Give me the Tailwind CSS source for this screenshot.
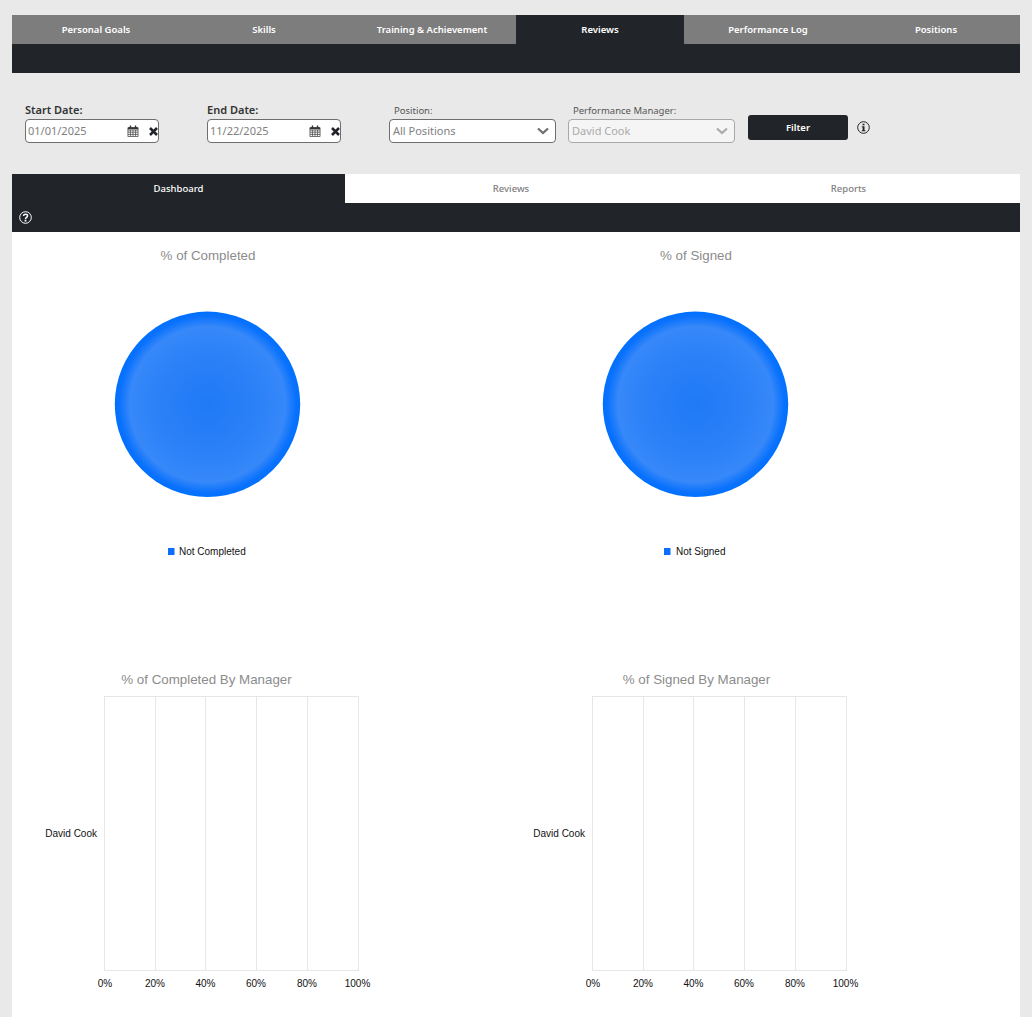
<!DOCTYPE html>
<html lang="en">
<head>
    <meta charset="UTF-8">
    <title>Reviews</title>
    <script src="https://cdn.jsdelivr.net/npm/@tailwindcss/browser@4"></script>
</head>
<body class="bg-[#e9e9e9] font-['Noto_Sans',sans-serif] overflow-hidden">
    <div class="h-[1017px] px-3 pt-[15px] w-[1032px]">
        <!-- Main tabs -->
        <nav class="grid grid-cols-6 h-[29px] bg-[#7d7d7d] text-[9.500px] font-semibold text-white">
            <a class="flex items-center justify-center pt-px">Personal Goals</a>
            <a class="flex items-center justify-center pt-px">Skills</a>
            <a class="flex items-center justify-center pt-px">Training &amp; Achievement</a>
            <a class="flex items-center justify-center pt-px bg-[#212529]">Reviews</a>
            <a class="flex items-center justify-center pt-px">Performance Log</a>
            <a class="flex items-center justify-center pt-px">Positions</a>
        </nav>
        <div class="h-[29px] bg-[#212529]"></div>

        <!-- Filters -->
        <section class="flex items-start h-[101px] pt-[30px] pl-[13px]">
            <div class="w-[182px]">
                <label class="block h-[15px] -mt-px mb-[2px] text-[11px] leading-[15px] font-semibold text-[#333]">Start Date:</label>
                <div class="flex items-center w-[134px] h-6 pl-[2px] bg-white border border-[#6e6e6e] rounded-[4px] text-[11px] text-[#808080]">
                    <span class="flex-1">01/01/2025</span>
                    <svg class="w-3 h-3 mr-[10px]" viewBox="0 0 13 13"><path fill="none" stroke="#444" stroke-width=".8" d="M1 3h11v9.500h-11zM1 5.500h11M1 7.800h11M1 10.200h11M3.700 5.500v7M6.500 5.500v7M9.300 5.500v7"/><path fill="#333" d="M3 .5h1.500v3h-1.500zM8.500 .5h1.500v3h-1.500zM1 2.500h11v2h-11z"/></svg>
                    <svg class="w-[9px] h-[9px]" viewBox="0 0 9 9"><path stroke="#212529" stroke-width="2.600" d="M1 1l7 7M8 1l-7 7"/></svg>
                </div>
            </div>
            <div class="w-[182px]">
                <label class="block h-[15px] -mt-px mb-[2px] text-[11px] leading-[15px] font-semibold text-[#333]">End Date:</label>
                <div class="flex items-center w-[134px] h-6 pl-[2px] bg-white border border-[#6e6e6e] rounded-[4px] text-[11px] text-[#808080]">
                    <span class="flex-1">11/22/2025</span>
                    <svg class="w-3 h-3 mr-[10px]" viewBox="0 0 13 13"><path fill="none" stroke="#444" stroke-width=".8" d="M1 3h11v9.500h-11zM1 5.500h11M1 7.800h11M1 10.200h11M3.700 5.500v7M6.500 5.500v7M9.300 5.500v7"/><path fill="#333" d="M3 .5h1.500v3h-1.500zM8.500 .5h1.500v3h-1.500zM1 2.500h11v2h-11z"/></svg>
                    <svg class="w-[9px] h-[9px]" viewBox="0 0 9 9"><path stroke="#212529" stroke-width="2.600" d="M1 1l7 7M8 1l-7 7"/></svg>
                </div>
            </div>
            <div class="w-[179px]">
                <label class="block h-[15px] pl-[5px] text-[9.500px] leading-[15px] text-[#555]">Position:</label>
                <div class="flex items-center w-[167px] h-6 mt-px pl-[3px] pr-[6px] bg-white border border-[#6e6e6e] rounded-[4px] text-[11px] text-[#808080]">
                    <span class="flex-1">All Positions</span>
                    <svg class="w-3 h-2" viewBox="0 0 12 8"><path fill="none" stroke="#6e6e6e" stroke-width="2.200" d="M1 1.500l5 4.500 5-4.500"/></svg>
                </div>
            </div>
            <div class="w-[180px]">
                <label class="block h-[15px] pl-[5px] text-[9.500px] leading-[15px] text-[#555]">Performance Manager:</label>
                <div class="flex items-center w-[167px] h-6 mt-px pl-[3px] pr-[6px] bg-[#f5f5f5] border border-[#a8a8a8] rounded-[4px] text-[11px] text-[#aaa]">
                    <span class="flex-1">David Cook</span>
                    <svg class="w-3 h-2" viewBox="0 0 12 8"><path fill="none" stroke="#aaa" stroke-width="2.200" d="M1 1.500l5 4.500 5-4.500"/></svg>
                </div>
            </div>
            <button class="w-[100px] h-[25px] mt-[12px] pt-px bg-[#212529] rounded-[3px] text-[9.500px] font-semibold text-white">Filter</button>
            <svg class="w-[13px] h-[13px] ml-[9px] mt-[18px]" viewBox="0 0 13 13"><circle cx="6.500" cy="6.500" r="5.800" fill="none" stroke="#222" stroke-width="1"/><path fill="#222" d="M5.500 2.700h2v1.500h-2zM4.800 5.200h2.700v4.100h.8v1h-3.500v-1h.8v-3.100h-.8z"/></svg>
        </section>

        <!-- Sub tabs -->
        <nav class="grid grid-cols-[333px_332px_343px] h-[29px] bg-white text-[9.500px] font-medium text-[#808080]">
            <a class="flex items-center justify-center pt-px bg-[#212529] text-white">Dashboard</a>
            <a class="flex items-center justify-center pt-px">Reviews</a>
            <a class="flex items-center justify-center pt-px">Reports</a>
        </nav>
        <div class="flex items-center h-[29px] pl-[7px] bg-[#212529]">
            <svg class="w-[13px] h-[13px]" viewBox="0 0 13 13"><circle cx="6.500" cy="6.500" r="5.800" fill="none" stroke="#fff" stroke-width="1"/><path fill="none" stroke="#fff" stroke-width="1.500" d="M4.500 5c.2-2.500 4.200-2.300 4 0 0 1.300-2 1.300-2 3"/><path fill="#fff" d="M5.600 8.700h1.800v1.700h-1.800z"/></svg>
        </div>

        <!-- Charts -->
        <main class="h-[785px] bg-white font-['Liberation_Sans',sans-serif]">
            <svg width="1008" height="785" viewBox="0 0 1008 785">
                <defs>
                    <radialGradient id="pie">
                        <stop offset="0" stop-color="#1f7af7"/>
                        <stop offset="0.5" stop-color="#2a80f7"/>
                        <stop offset="0.84" stop-color="#3788f9"/>
                        <stop offset="0.95" stop-color="#0a72fd"/>
                        <stop offset="1" stop-color="#0070ff"/>
                    </radialGradient>
                </defs>

                <!-- pies -->
                <text x="196" y="28" text-anchor="middle" font-size="13.330" fill="#8c8c8c">% of Completed</text>
                <circle cx="195.500" cy="172.300" r="92.700" fill="url(#pie)"/>
                <rect x="156" y="316" width="6.500" height="7" fill="#0a6ffb"/>
                <text x="167" y="322.500" font-size="10" fill="#111">Not Completed</text>

                <text x="684" y="28" text-anchor="middle" font-size="13.330" fill="#8c8c8c">% of Signed</text>
                <circle cx="683.500" cy="172.300" r="92.700" fill="url(#pie)"/>
                <rect x="652" y="316" width="6.500" height="7" fill="#0a6ffb"/>
                <text x="664" y="322.500" font-size="10" fill="#111">Not Signed</text>

                <!-- bar chart left -->
                <text x="194.500" y="452" text-anchor="middle" font-size="13.330" fill="#8c8c8c">% of Completed By Manager</text>
                <g stroke="#e6e6e6" stroke-width="1" fill="none">
                    <path d="M92.500 464.500h254M92.500 738.500h254"/>
                    <path d="M92.500 464v275M143.500 464v275M193.500 464v275M244.500 464v275M295.500 464v275M346.500 464v275"/>
                </g>
                <text x="85" y="605" text-anchor="end" font-size="10" fill="#111">David Cook</text>
                <g font-size="10" fill="#111" text-anchor="middle">
                    <text x="93" y="755">0%</text><text x="143" y="755">20%</text><text x="193.500" y="755">40%</text><text x="244" y="755">60%</text><text x="295" y="755">80%</text><text x="345.500" y="755">100%</text>
                </g>

                <!-- bar chart right -->
                <text x="684.500" y="452" text-anchor="middle" font-size="13.330" fill="#8c8c8c">% of Signed By Manager</text>
                <g stroke="#e6e6e6" stroke-width="1" fill="none">
                    <path d="M580.500 464.500h254M580.500 738.500h254"/>
                    <path d="M580.500 464v275M631.500 464v275M681.500 464v275M732.500 464v275M783.500 464v275M834.500 464v275"/>
                </g>
                <text x="573" y="605" text-anchor="end" font-size="10" fill="#111">David Cook</text>
                <g font-size="10" fill="#111" text-anchor="middle">
                    <text x="581" y="755">0%</text><text x="631" y="755">20%</text><text x="681.500" y="755">40%</text><text x="732" y="755">60%</text><text x="783" y="755">80%</text><text x="833.500" y="755">100%</text>
                </g>
            </svg>
        </main>
    </div>
</body>
</html>
